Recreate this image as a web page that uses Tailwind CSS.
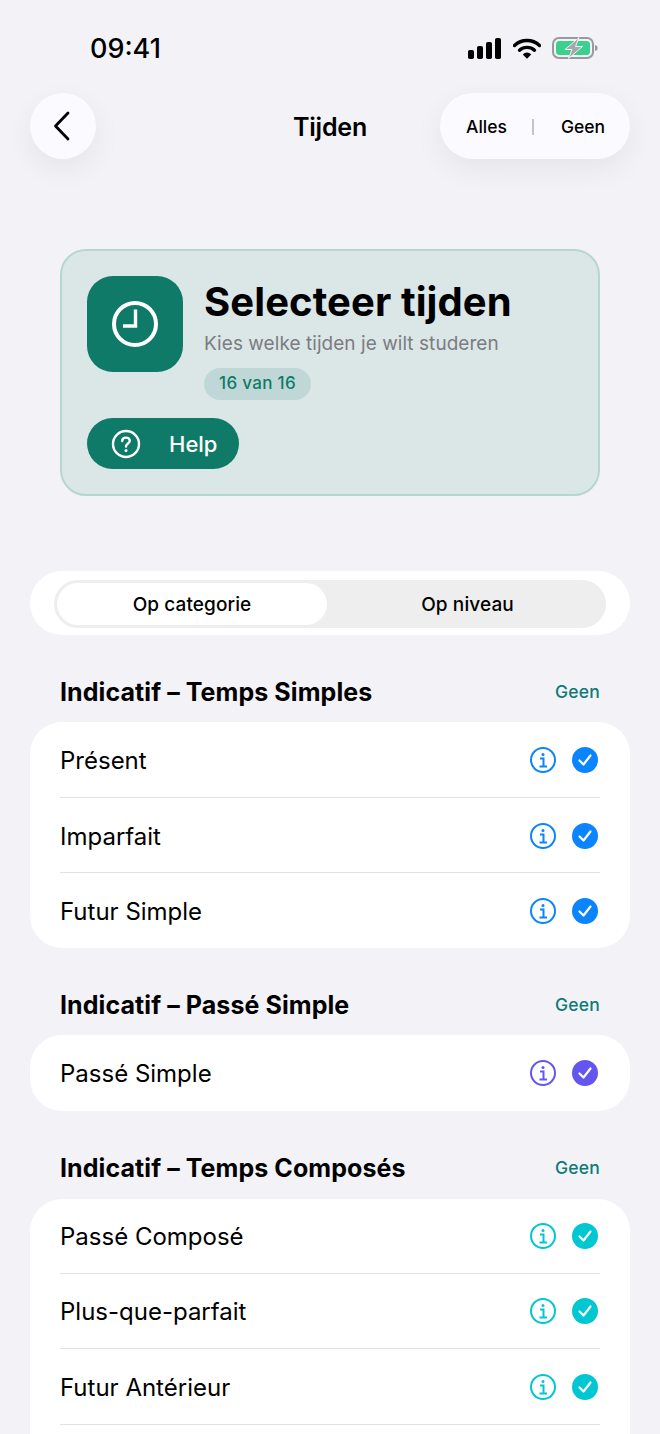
<!DOCTYPE html>
<html lang="nl">
  <head>
    <meta charset="UTF-8" />
    <meta name="viewport" content="width=device-width, initial-scale=1.0" />
    <title>Tijden</title>
    <script src="https://cdn.jsdelivr.net/npm/@tailwindcss/browser@4"></script>
  </head>
  <body class="antialiased">
    <div class="w-[660px] h-[1434px] overflow-hidden bg-[#f2f2f7] font-['Inter',sans-serif] text-black">
      <!-- Status bar -->
      <div class="h-[93px] flex justify-between pl-[90px] pr-[62px] pt-[33px]">
        <span class="text-[27px] leading-[32px] font-medium">09:41</span>
        <div class="flex items-start gap-[12px] pt-[4px]">
          <svg width="33" height="21" viewBox="0 0 33 21" class="mt-[1px]"><rect x="0" y="12" width="6" height="9" rx="1.800"/><rect x="9" y="8" width="6" height="13" rx="1.800"/><rect x="18" y="4" width="6" height="17" rx="1.800"/><rect x="27" y="0" width="6" height="21" rx="1.800"/></svg>
          <svg width="28" height="21" viewBox="0 0 28 21" class="mt-[1px] -mr-[1px]"><path d="M1.500 7.500C8.500 0.800 19.500 0.800 26.500 7.500" fill="none" stroke="black" stroke-width="3.400" stroke-linecap="round"/><path d="M6.500 12.200C10.800 8.400 17.200 8.400 21.500 12.200" fill="none" stroke="black" stroke-width="3.400" stroke-linecap="round"/><path d="M9.800 16.400C12.300 13.700 15.700 13.700 18.200 16.400L14 20.800Z"/></svg>
          <svg width="46" height="22" viewBox="0 0 46 22"><rect x="1" y="1" width="40" height="20" rx="6" fill="none" stroke="#9a9a9e" stroke-width="2"/><rect x="4" y="4" width="34" height="14" rx="3.500" fill="#3ccf8e"/><path d="M43 8C45 8.500 45.600 9.500 45.600 11S45 13.500 43 14Z" fill="#9a9a9e"/><path d="M27 0.500L13 12.500H20L16.500 21.500L30.500 9.500H23.500Z" fill="#a8a8ac" stroke="#f2f2f7" stroke-width="1"/></svg>
        </div>
      </div>

      <!-- Nav -->
      <div class="h-[66px] mx-[30px] grid grid-cols-[190px_1fr_190px] items-center">
        <button class="w-[66px] h-[66px] rounded-full bg-[#fbfaff] shadow-[0_10px_30px_rgba(0,0,0,0.06)] flex items-center justify-center">
          <svg width="20" height="30" viewBox="0 0 20 30" fill="none" stroke="black" stroke-width="2.800" stroke-linecap="round" stroke-linejoin="round" class="-ml-[3px]"><path d="M16 2L3.500 15L16 28"/></svg>
        </button>
        <span class="text-[25px] leading-[32px] font-semibold tracking-[-0.2px] text-center pt-[2px]">Tijden</span>
        <div class="w-[190px] h-[66px] rounded-full bg-[#fbfaff] shadow-[0_10px_30px_rgba(0,0,0,0.06)] flex items-center pl-[26px] pt-[2px] text-[17.5px] font-medium">
          <span>Alles</span>
          <span class="w-[2px] h-[16px] bg-[#c4c4c8] ml-[25px] mr-[27px]"></span>
          <span>Geen</span>
        </div>
      </div>

      <!-- Hero card -->
      <div class="mt-[90px] mx-[60px] h-[247px] rounded-[26px] border-2 border-[#b6d6d2] bg-[#dbe6e7] pl-[25px] pr-[24px] pt-[25px]">
        <div class="flex gap-[21px]">
          <div class="w-[96px] h-[96px] rounded-[26px] bg-[#107a68] flex items-center justify-center shrink-0">
            <svg width="46" height="46" viewBox="0 0 46 46" fill="none" stroke="white" stroke-width="4"><circle cx="23" cy="23" r="21"/><path d="M23.500 8.500V25H11" stroke-width="3.400"/></svg>
          </div>
          <div class="flex flex-col">
            <span class="text-[40px] leading-[50px] font-bold tracking-[0.1px] mt-[1px]">Selecteer tijden</span>
            <span class="text-[19px] leading-[26px] tracking-[0.05px] text-[#7c7c80] mt-[4px]">Kies welke tijden je wilt studeren</span>
            <span class="mt-[11px] w-[107px] h-[32px] rounded-full bg-[#bfd8d7] text-[#107a68] text-[17px] font-medium tracking-[0.3px] flex items-center justify-center">16 van 16</span>
          </div>
        </div>
        <button class="mt-[18px] w-[152px] h-[51px] rounded-full bg-[#107a68] text-white flex items-center pl-[24px] gap-[28px]">
          <svg width="30" height="30" viewBox="0 0 30 30" fill="none" stroke="white" stroke-width="2.400"><circle cx="15" cy="15" r="13"/><path d="M11.200 12C11.200 9.800 13 8.600 15 8.600C17 8.600 18.800 9.800 18.800 11.800C18.800 14.500 15 14.500 15 17.500" stroke-linecap="round"/><circle cx="15" cy="21.500" r="1.500" fill="white" stroke="none"/></svg>
          <span class="text-[22px] leading-[28px] font-medium">Help</span>
        </button>
      </div>

      <!-- Segmented control -->
      <div class="mt-[75px] mx-[30px] h-[64px] rounded-[32px] bg-white flex items-start pt-[9px] px-[24px]">
        <div class="w-full h-[48px] rounded-full bg-[#eeeeee] flex p-[3px]">
          <div class="w-[270px] rounded-full bg-white flex items-center justify-center pt-[2px] text-[19px] tracking-[0.1px] font-[450]">Op categorie</div>
          <div class="flex-1 flex items-center justify-center pl-[5px] pt-[2px] text-[19px] tracking-[0.1px] font-[450]">Op niveau</div>
        </div>
      </div>

      <!-- Indicatif simples -->
      <div class="mt-[38px] mx-[60px] h-[38px] flex items-center justify-between">
        <span class="text-[25px] leading-[36px] font-bold tracking-[0.08px]">Indicatif – Temps Simples</span>
        <span class="text-[17.5px] tracking-[0.2px] font-medium text-[#107a78]">Geen</span>
      </div>
      <div class="mt-[11px] mx-[30px] rounded-[32px] bg-white px-[30px]">
        <div class="h-[76px] flex items-center justify-between border-b border-[#e2e2e4]">
          <span class="text-[24px] leading-[32px] pt-[2px]">Présent</span>
          <div class="flex items-center gap-[16px] pr-[2px]">
            <svg width="26" height="26" viewBox="0 0 26 26" fill="none" stroke="#0a84ff" stroke-width="2"><circle cx="13" cy="13" r="12"/><circle cx="13" cy="7.500" r="1.500" fill="#0a84ff" stroke="none"/><path d="M10 11.500H13.500V19M9.500 19.500H17"/></svg>
            <svg width="26" height="26" viewBox="0 0 26 26"><circle cx="13" cy="13" r="13" fill="#0a84ff"/><path d="M7.500 13.500L11.500 17.500L18.500 8.500" fill="none" stroke="white" stroke-width="2.200" stroke-linecap="round" stroke-linejoin="round"/></svg>
          </div>
        </div>
        <div class="h-[75px] pt-[2px] flex items-center justify-between border-b border-[#e2e2e4]">
          <span class="text-[24px] leading-[32px] pt-[2px]">Imparfait</span>
          <div class="flex items-center gap-[16px] pr-[2px]">
            <svg width="26" height="26" viewBox="0 0 26 26" fill="none" stroke="#0a84ff" stroke-width="2"><circle cx="13" cy="13" r="12"/><circle cx="13" cy="7.500" r="1.500" fill="#0a84ff" stroke="none"/><path d="M10 11.500H13.500V19M9.500 19.500H17"/></svg>
            <svg width="26" height="26" viewBox="0 0 26 26"><circle cx="13" cy="13" r="13" fill="#0a84ff"/><path d="M7.500 13.500L11.500 17.500L18.500 8.500" fill="none" stroke="white" stroke-width="2.200" stroke-linecap="round" stroke-linejoin="round"/></svg>
          </div>
        </div>
        <div class="h-[75px] flex items-center justify-between">
          <span class="text-[24px] leading-[32px] pt-[2px]">Futur Simple</span>
          <div class="flex items-center gap-[16px] pr-[2px]">
            <svg width="26" height="26" viewBox="0 0 26 26" fill="none" stroke="#0a84ff" stroke-width="2"><circle cx="13" cy="13" r="12"/><circle cx="13" cy="7.500" r="1.500" fill="#0a84ff" stroke="none"/><path d="M10 11.500H13.500V19M9.500 19.500H17"/></svg>
            <svg width="26" height="26" viewBox="0 0 26 26"><circle cx="13" cy="13" r="13" fill="#0a84ff"/><path d="M7.500 13.500L11.500 17.500L18.500 8.500" fill="none" stroke="white" stroke-width="2.200" stroke-linecap="round" stroke-linejoin="round"/></svg>
          </div>
        </div>
      </div>

      <!-- Indicatif passe simple -->
      <div class="mt-[38px] mx-[60px] h-[38px] flex items-center justify-between">
        <span class="text-[25px] leading-[36px] font-bold tracking-[0.08px]">Indicatif – Passé Simple</span>
        <span class="text-[17.5px] tracking-[0.2px] font-medium text-[#107a78]">Geen</span>
      </div>
      <div class="mt-[11px] mx-[30px] rounded-[32px] bg-white px-[30px]">
        <div class="h-[76px] flex items-center justify-between">
          <span class="text-[24px] leading-[32px] pt-[2px]">Passé Simple</span>
          <div class="flex items-center gap-[16px] pr-[2px]">
            <svg width="26" height="26" viewBox="0 0 26 26" fill="none" stroke="#6356f0" stroke-width="2"><circle cx="13" cy="13" r="12"/><circle cx="13" cy="7.500" r="1.500" fill="#6356f0" stroke="none"/><path d="M10 11.500H13.500V19M9.500 19.500H17"/></svg>
            <svg width="26" height="26" viewBox="0 0 26 26"><circle cx="13" cy="13" r="13" fill="#6356f0"/><path d="M7.500 13.500L11.500 17.500L18.500 8.500" fill="none" stroke="white" stroke-width="2.200" stroke-linecap="round" stroke-linejoin="round"/></svg>
          </div>
        </div>
      </div>

      <!-- Indicatif composes -->
      <div class="mt-[38px] mx-[60px] h-[38px] flex items-center justify-between">
        <span class="text-[25px] leading-[36px] font-bold tracking-[0.08px]">Indicatif – Temps Composés</span>
        <span class="text-[17.5px] tracking-[0.2px] font-medium text-[#107a78]">Geen</span>
      </div>
      <div class="mt-[12px] mx-[30px] rounded-t-[32px] bg-white px-[30px] h-[300px]">
        <div class="h-[75px] flex items-center justify-between border-b border-[#e2e2e4]">
          <span class="text-[24px] leading-[32px] pt-[2px]">Passé Composé</span>
          <div class="flex items-center gap-[16px] pr-[2px]">
            <svg width="26" height="26" viewBox="0 0 26 26" fill="none" stroke="#00c7d1" stroke-width="2"><circle cx="13" cy="13" r="12"/><circle cx="13" cy="7.500" r="1.500" fill="#00c7d1" stroke="none"/><path d="M10 11.500H13.500V19M9.500 19.500H17"/></svg>
            <svg width="26" height="26" viewBox="0 0 26 26"><circle cx="13" cy="13" r="13" fill="#00c7d1"/><path d="M7.500 13.500L11.500 17.500L18.500 8.500" fill="none" stroke="white" stroke-width="2.200" stroke-linecap="round" stroke-linejoin="round"/></svg>
          </div>
        </div>
        <div class="h-[75px] flex items-center justify-between border-b border-[#e2e2e4]">
          <span class="text-[24px] leading-[32px] pt-[2px]">Plus-que-parfait</span>
          <div class="flex items-center gap-[16px] pr-[2px]">
            <svg width="26" height="26" viewBox="0 0 26 26" fill="none" stroke="#00c7d1" stroke-width="2"><circle cx="13" cy="13" r="12"/><circle cx="13" cy="7.500" r="1.500" fill="#00c7d1" stroke="none"/><path d="M10 11.500H13.500V19M9.500 19.500H17"/></svg>
            <svg width="26" height="26" viewBox="0 0 26 26"><circle cx="13" cy="13" r="13" fill="#00c7d1"/><path d="M7.500 13.500L11.500 17.500L18.500 8.500" fill="none" stroke="white" stroke-width="2.200" stroke-linecap="round" stroke-linejoin="round"/></svg>
          </div>
        </div>
        <div class="h-[76px] flex items-center justify-between border-b border-[#e2e2e4]">
          <span class="text-[24px] leading-[32px] pt-[2px]">Futur Antérieur</span>
          <div class="flex items-center gap-[16px] pr-[2px]">
            <svg width="26" height="26" viewBox="0 0 26 26" fill="none" stroke="#00c7d1" stroke-width="2"><circle cx="13" cy="13" r="12"/><circle cx="13" cy="7.500" r="1.500" fill="#00c7d1" stroke="none"/><path d="M10 11.500H13.500V19M9.500 19.500H17"/></svg>
            <svg width="26" height="26" viewBox="0 0 26 26"><circle cx="13" cy="13" r="13" fill="#00c7d1"/><path d="M7.500 13.500L11.500 17.500L18.500 8.500" fill="none" stroke="white" stroke-width="2.200" stroke-linecap="round" stroke-linejoin="round"/></svg>
          </div>
        </div>
      </div>
    </div>
  </body>
</html>
